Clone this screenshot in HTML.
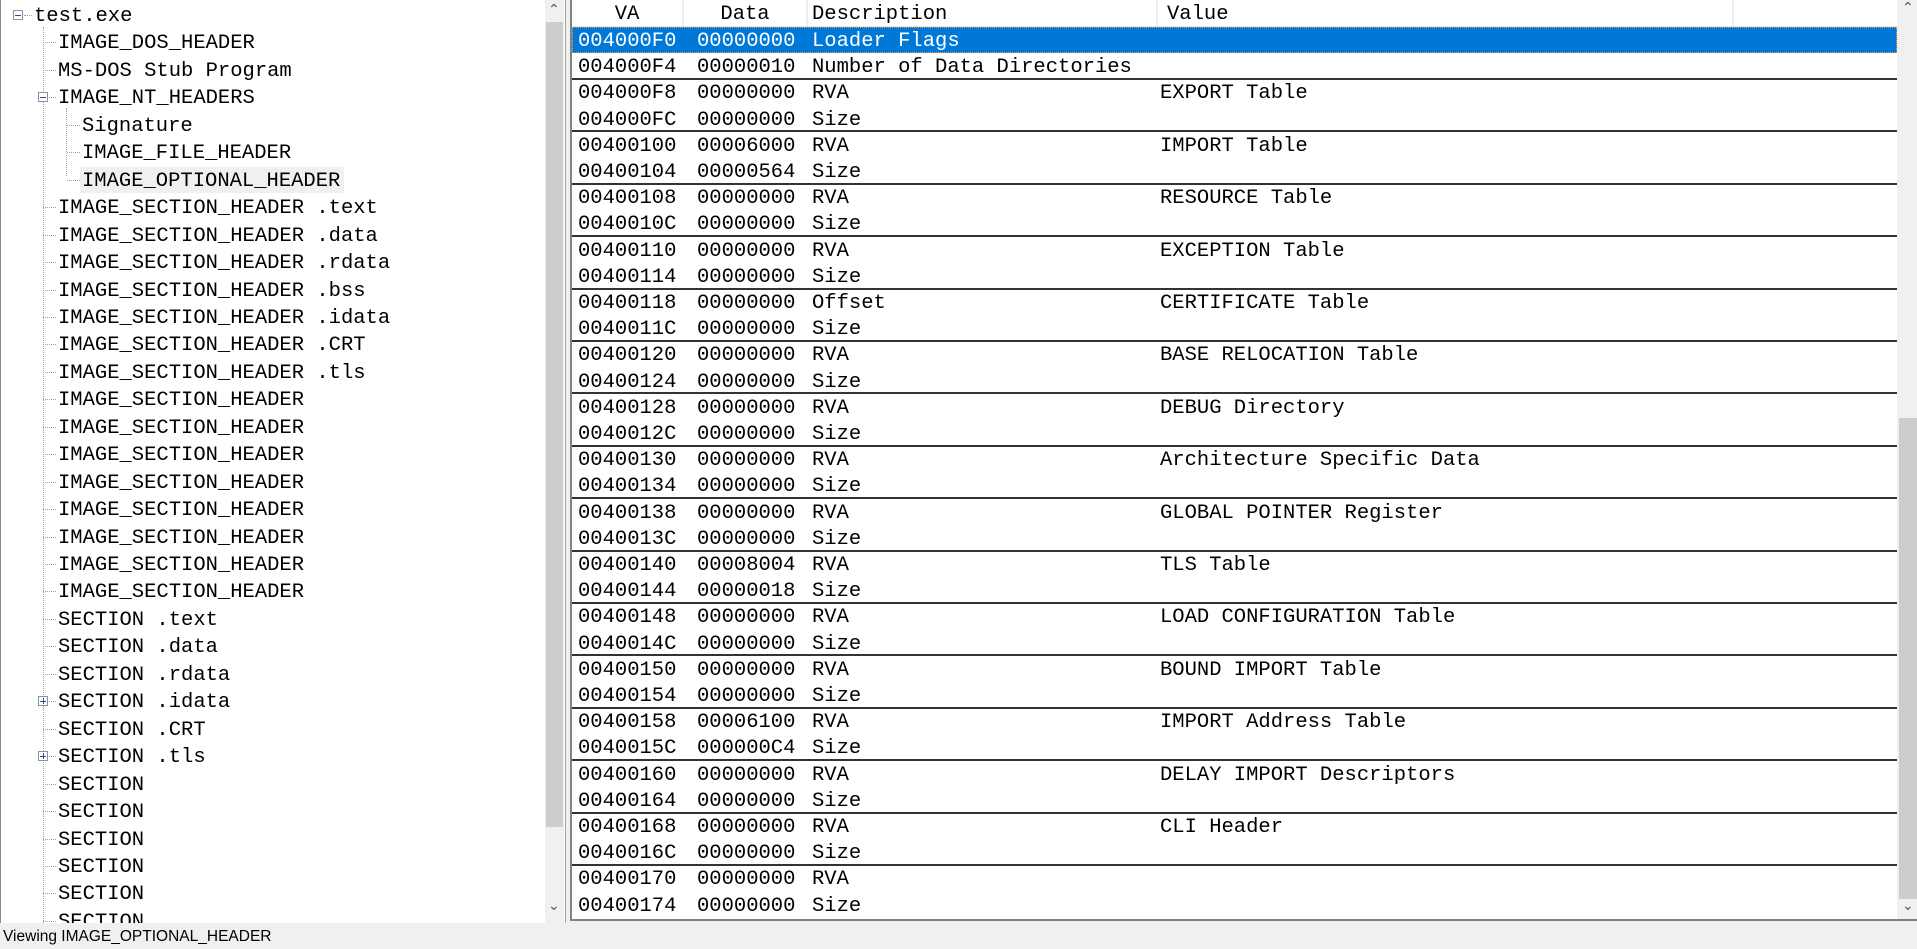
<!DOCTYPE html>
<html><head><meta charset="utf-8"><style>
*{margin:0;padding:0;box-sizing:border-box}
body{width:1917px;height:949px;overflow:hidden;background:#f0f0f0;font-family:"Liberation Mono","DejaVu Sans Mono",monospace;font-size:20.5px;color:#000;position:relative}
.abs{position:absolute}
#left{left:0;top:0;width:566px;height:923px;background:#fff;border-right:1px solid #a0a0a0;border-left:1px solid #888;overflow:hidden}
.tr{position:absolute;height:27px;line-height:27px;white-space:pre;padding-top:3px}
.vl{position:absolute;width:0;border-left:1px dotted #a0a0a0}
.hl{position:absolute;height:0;border-top:1px dotted #a0a0a0}
.box{position:absolute;width:10px;height:10px;border:1px solid #919191;background:#fff;}
.box:before{content:"";position:absolute;left:1px;top:3.5px;width:6px;height:1px;background:#2050a0}
.plus:after{content:"";position:absolute;left:3.5px;top:1px;width:1px;height:6px;background:#2050a0}
.sb{background:#f0f0f0}
#right{left:570px;top:0;width:1347px;height:921px;background:#fff;border-left:2px solid #828282;border-bottom:2px solid #828282;overflow:hidden}
.r{position:absolute;left:0;width:1325px;height:26px;line-height:26px;white-space:pre}
.c{position:absolute;top:2px}
.sep{position:absolute;left:0;width:1325px;height:2px;background:#333}
.hd{position:absolute;top:0;height:27px;line-height:26px;padding-top:2px;border-right:2px solid #eee;text-align:center}
</style></head><body>
<div id="left" class="abs">
<div class="vl" style="left:42px;top:27px;height:900px"></div>
<div class="vl" style="left:65px;top:108px;height:68px"></div>
<div id="tree"></div>
<div class="abs sb" style="left:544px;top:0;width:19px;height:923px"></div>
<div class="abs" style="left:545px;top:22px;width:17px;height:805px;background:#cdcdcd"></div>
<div class="abs" style="left:547px;top:2px;font-size:14px;color:#555;font-family:'DejaVu Sans',sans-serif">&#x2303;</div>
<div class="abs" style="left:547px;top:898px;font-size:14px;color:#555;font-family:'DejaVu Sans',sans-serif">&#x2304;</div>
</div>
<div id="right" class="abs">
<div class="hd" style="left:0;width:112px">VA</div>
<div class="hd" style="left:112px;width:124px">Data</div>
<div class="hd" style="left:236px;width:350px;text-align:left;padding-left:4px">Description</div>
<div class="hd" style="left:586px;width:576px;text-align:left;padding-left:9px">Value</div>
<div class="abs" style="left:0;top:26px;width:1325px;height:1px;background:#e5e5e5"></div>
<div id="rows"></div>
<div class="abs sb" style="left:1325px;top:0;width:22px;height:921px"></div>
<div class="abs" style="left:1327px;top:418px;width:19px;height:481px;background:#cdcdcd"></div>
<div class="abs" style="left:1330px;top:0;font-size:14px;color:#555;font-family:'DejaVu Sans',sans-serif">&#x2303;</div>
<div class="abs" style="left:1330px;top:898px;font-size:14px;color:#555;font-family:'DejaVu Sans',sans-serif">&#x2304;</div>
</div>
<div class="abs" style="left:3px;top:926px;font-family:'Liberation Sans',sans-serif;font-size:15.5px;line-height:22px">Viewing IMAGE_OPTIONAL_HEADER</div>
<script>
var T=[[0,'test.exe','m'],[1,'IMAGE_DOS_HEADER'],[1,'MS-DOS Stub Program'],[1,'IMAGE_NT_HEADERS','m'],[2,'Signature'],[2,'IMAGE_FILE_HEADER'],[2,'IMAGE_OPTIONAL_HEADER','h']];
['.text','.data','.rdata','.bss','.idata','.CRT','.tls','','','','','','','',''].forEach(function(s){T.push([1,'IMAGE_SECTION_HEADER'+(s?' '+s:'')])});
T.push([1,'SECTION .text'],[1,'SECTION .data'],[1,'SECTION .rdata'],[1,'SECTION .idata','p'],[1,'SECTION .CRT'],[1,'SECTION .tls','p']);
for(var i=0;i<6;i++)T.push([1,'SECTION']);
var h='',tx=[33,57,81],lx=[17,42,66];
T.forEach(function(t,i){var y=i*27.45,cy=y+15;
 if(t[2]=='h')h+='<div class="abs" style="left:79px;top:'+(y+2)+'px;width:264px;height:26px;background:#f0f0f0"></div>';
 h+='<div class="tr" style="left:'+tx[t[0]]+'px;top:'+y+'px">'+t[1]+'</div>';
 if(t[0]>0)h+='<div class="hl" style="left:'+lx[t[0]]+'px;top:'+cy+'px;width:'+(tx[t[0]]-lx[t[0]]-2)+'px"></div>';
 if(t[2]=='m'||t[2]=='p'){var bx=t[0]==0?12:37;h+='<div class="box'+(t[2]=='p'?' plus':'')+'" style="left:'+bx+'px;top:'+(cy-5)+'px"></div>';
  if(t[0]==0)h+='<div class="hl" style="left:23px;top:'+cy+'px;width:8px"></div>';}
});
document.getElementById('tree').innerHTML=h;
var names=['EXPORT Table','IMPORT Table','RESOURCE Table','EXCEPTION Table','CERTIFICATE Table','BASE RELOCATION Table','DEBUG Directory','Architecture Specific Data','GLOBAL POINTER Register','TLS Table','LOAD CONFIGURATION Table','BOUND IMPORT Table','IMPORT Address Table','DELAY IMPORT Descriptors','CLI Header',''];
var data={0x100:'00006000',0x104:'00000564',0x140:'00008004',0x144:'00000018',0x158:'00006100',0x15C:'000000C4'};
var R=[['004000F0','00000000','Loader Flags',''],['004000F4','00000010','Number of Data Directories','']];
for(var k=0;k<16;k++){var a=0xF8+k*8;
 R.push([(0x400000+a).toString(16).toUpperCase().padStart(8,'0'),data[a]||'00000000',k==4?'Offset':'RVA',names[k]]);
 R.push([(0x400000+a+4).toString(16).toUpperCase().padStart(8,'0'),data[a+4]||'00000000','Size','']);}
var s='';
R.forEach(function(r,i){var y=27+i*26.2;
 var st=i==0?'background:#0078d7;color:#fff;outline:1px dotted #f0a040;outline-offset:-1px;':'';
 s+='<div class="r" style="top:'+y+'px;'+st+'"><span class="c" style="left:6px">'+r[0]+'</span><span class="c" style="left:125px">'+r[1]+'</span><span class="c" style="left:240px">'+r[2]+'</span><span class="c" style="left:588px">'+r[3]+'</span></div>';
 if(i>=2&&i%2==0)s+='<div class="sep" style="top:'+(y-1.5)+'px"></div>';
});
s+='<div class="sep" style="top:'+(27+36*26.2-1.5)+'px"></div>';
document.getElementById('rows').innerHTML=s;
</script>
</body></html>
